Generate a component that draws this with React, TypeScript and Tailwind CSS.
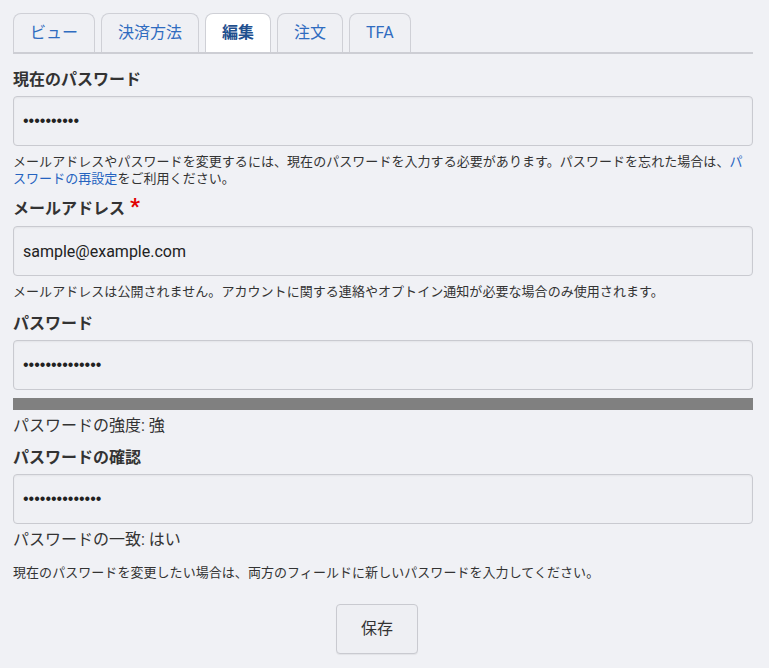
import React from "react";

const font = { fontFamily: 'Roboto, "Noto Sans CJK JP", sans-serif' };
const inputFont = { fontFamily: '"Liberation Sans", "Noto Sans CJK JP", sans-serif' };

function Tab({ label, active }: { label: string; active?: boolean }) {
  return (
    <div
      className={
        "h-[39px] px-4 flex items-center rounded-t-[8px] border border-b-0 border-[#cfd0d6] text-[16px] " +
        (active ? "bg-white text-[#1f4f8e] font-bold" : "bg-[#eff0f4] text-[#2f6cc0]")
      }
    >
      {label}
    </div>
  );
}

function Field({ value, type = "password" }: { value: string; type?: string }) {
  return (
    <input
      type={type}
      readOnly
      defaultValue={value}
      className="block w-full h-[50px] px-[9px] rounded-[4px] border border-[#c9cad0] bg-[#eff0f4] text-[16px] text-[#222] shadow-[inset_0_1px_2px_rgba(0,0,0,0.05)] outline-none"
      style={type === "password" ? inputFont : font}
    />
  );
}

export default function App() {
  return (
    <div className="min-h-[668px] bg-[#f0f1f5] px-[13px] pt-[13px] text-[#333]" style={font}>
      <div className="w-[740px]">
        <div className="flex gap-[6px] border-b-2 border-[#cdced4]">
          <Tab label="ビュー" />
          <Tab label="決済方法" />
          <Tab label="編集" active />
          <Tab label="注文" />
          <Tab label="TFA" />
        </div>

        <div className="mt-[14px] text-[16px] leading-[24px] font-bold">現在のパスワード</div>
        <div className="mt-[4px]">
          <Field value="abcdefghij" />
        </div>
        <p className="mt-[7px] text-[13px] leading-[17px] tracking-[0.05px]">
          メールアドレスやパスワードを変更するには、現在のパスワードを入力する必要があります。パスワードを忘れた場合は、
          <a className="text-[#2563c0]">パスワードの再設定</a>をご利用ください。
        </p>

        <div className="mt-[10px] text-[16px] leading-[24px] font-bold flex items-start">
          メールアドレス
          <span className="ml-[5px] text-[#e00000] text-[22px] leading-[20px] font-bold">*</span>
        </div>
        <div className="mt-[5px]">
          <Field value="sample@example.com" type="text" />
        </div>
        <p className="mt-[7px] text-[13px] leading-[17px] tracking-[0.05px]">
          メールアドレスは公開されません。アカウントに関する連絡やオプトイン通知が必要な場合のみ使用されます。
        </p>

        <div className="mt-[12px] text-[16px] leading-[24px] font-bold">パスワード</div>
        <div className="mt-[4px]">
          <Field value="abcdefghijklmn" />
        </div>
        <div className="mt-[8px] h-[12px] bg-[#808080]" />
        <div className="mt-[4px] text-[16px] leading-[24px]">パスワードの強度: 強</div>

        <div className="mt-[8px] text-[16px] leading-[24px] font-bold">パスワードの確認</div>
        <div className="mt-[4px]">
          <Field value="abcdefghijklmn" />
        </div>
        <div className="mt-[4px] text-[16px] leading-[24px]">パスワードの一致: はい</div>
        <p className="mt-[12px] text-[13px] leading-[17px] tracking-[0.05px]">
          現在のパスワードを変更したい場合は、両方のフィールドに新しいパスワードを入力してください。
        </p>

        <div className="mt-[23px] flex justify-center pr-[12px]">
          <button
            className="w-[82px] h-[50px] rounded-[4px] border border-[#c9cad0] bg-[#eeeff3] text-[16px] text-[#333] shadow-[0_1px_1px_rgba(0,0,0,0.06)]"
            style={font}
          >
            保存
          </button>
        </div>
      </div>
    </div>
  );
}
